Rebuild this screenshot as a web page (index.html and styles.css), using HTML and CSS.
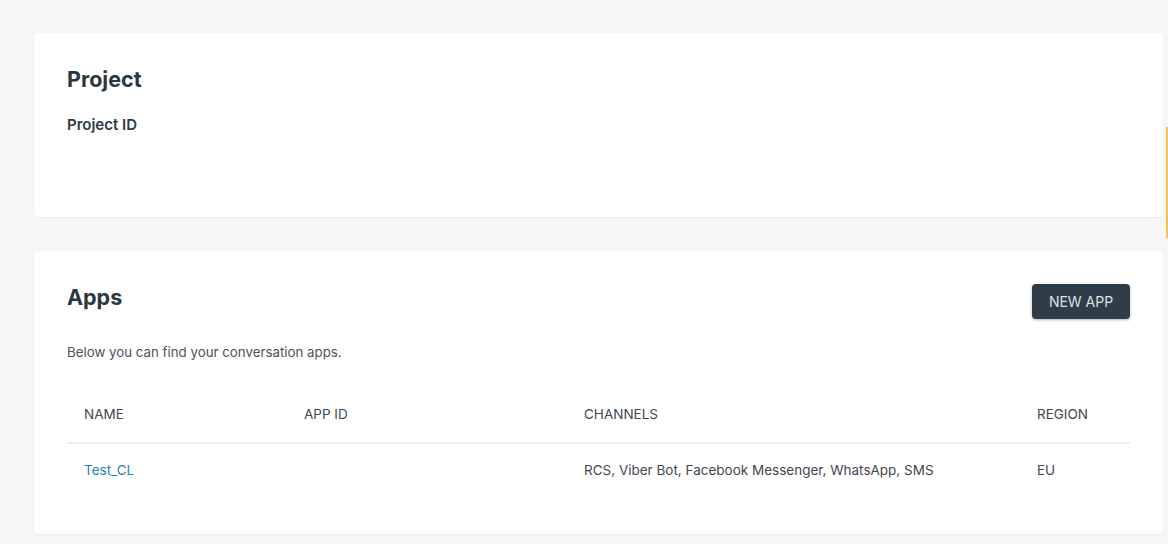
FILE: index.html
```html
<!DOCTYPE html>
<html>
<head>
<meta charset="utf-8">
<link rel="stylesheet" href="styles.css">
</head>
<body>
<div class="page">
  <section class="card project">
    <h1 class="title">Project</h1>
    <div class="label">Project ID</div>
  </section>
  <section class="card apps">
    <div class="apps-head">
      <h1 class="title">Apps</h1>
      <button class="btn">NEW APP</button>
    </div>
    <p class="desc">Below you can find your conversation apps.</p>
    <div class="table">
      <div class="row head">
        <div class="cell">NAME</div>
        <div class="cell">APP ID</div>
        <div class="cell">CHANNELS</div>
        <div class="cell">REGION</div>
      </div>
      <div class="row body">
        <div class="cell"><a class="link">Test_CL</a></div>
        <div class="cell"></div>
        <div class="cell">RCS, Viber Bot, Facebook Messenger, WhatsApp, SMS</div>
        <div class="cell">EU</div>
      </div>
    </div>
  </section>
</div>
<div class="edge-tab"></div>
</body>
</html>
```
FILE: styles.css
```css
* { box-sizing: border-box; }
html, body { margin: 0; padding: 0; }
body {
  background: #f6f6f6;
  font-family: Inter, "Noto Sans", sans-serif;
  color: #2e3a44;
  width: 1168px;
  height: 544px;
  overflow: hidden;
  position: relative;
}
.page {
  padding: 33px 5px 0 34px;
  display: flex;
  flex-direction: column;
  gap: 34px;
}
.card {
  background: #fff;
  border-radius: 4px;
  box-shadow: 0 1px 2px rgba(0,0,0,0.05);
  padding: 33px 33px 0 33px;
}
.project { height: 184px; padding-top: 34px; }
.apps { height: 283px; }
.title {
  margin: 0;
  font-size: 21.5px;
  line-height: 24px;
  font-weight: 700;
  color: #2b3641;
}
.label {
  margin-top: 24px;
  font-size: 15px;
  line-height: 20px;
  font-weight: 600;
  color: #2e3a44;
}
.apps-head {
  display: flex;
  justify-content: space-between;
  align-items: flex-start;
  height: 35px;
}
.apps-head .title { margin-top: 1px; }
.btn {
  width: 98px;
  height: 35px;
  border: none;
  border-radius: 4px;
  background: #2f3d48;
  color: #dde1e4;
  font-family: Inter, sans-serif;
  font-size: 14px;
  font-weight: 400;
  box-shadow: 0 1px 3px rgba(0,0,0,0.3);
}
.desc {
  margin: 25px 0 0;
  font-size: 13.3px;
  line-height: 16px;
  color: #4a535c;
}
.table { margin-top: 44px; }
.row {
  display: grid;
  grid-template-columns: 220px 280px 453px 1fr;
  font-size: 13.5px;
}
.row.head {
  height: 40px;
  color: #3f4851;
  border-bottom: 2px solid #eeeeee;
  align-items: start;
}
.row.body {
  padding-top: 16px;
  color: #3f4851;
}
.cell { padding-left: 17px; line-height: 20px; }
.link { color: #2a7fb8; text-decoration: none; }
.edge-tab {
  position: absolute;
  right: 0;
  top: 127px;
  width: 2px;
  height: 111px;
  background: #f5c056;
}
```
